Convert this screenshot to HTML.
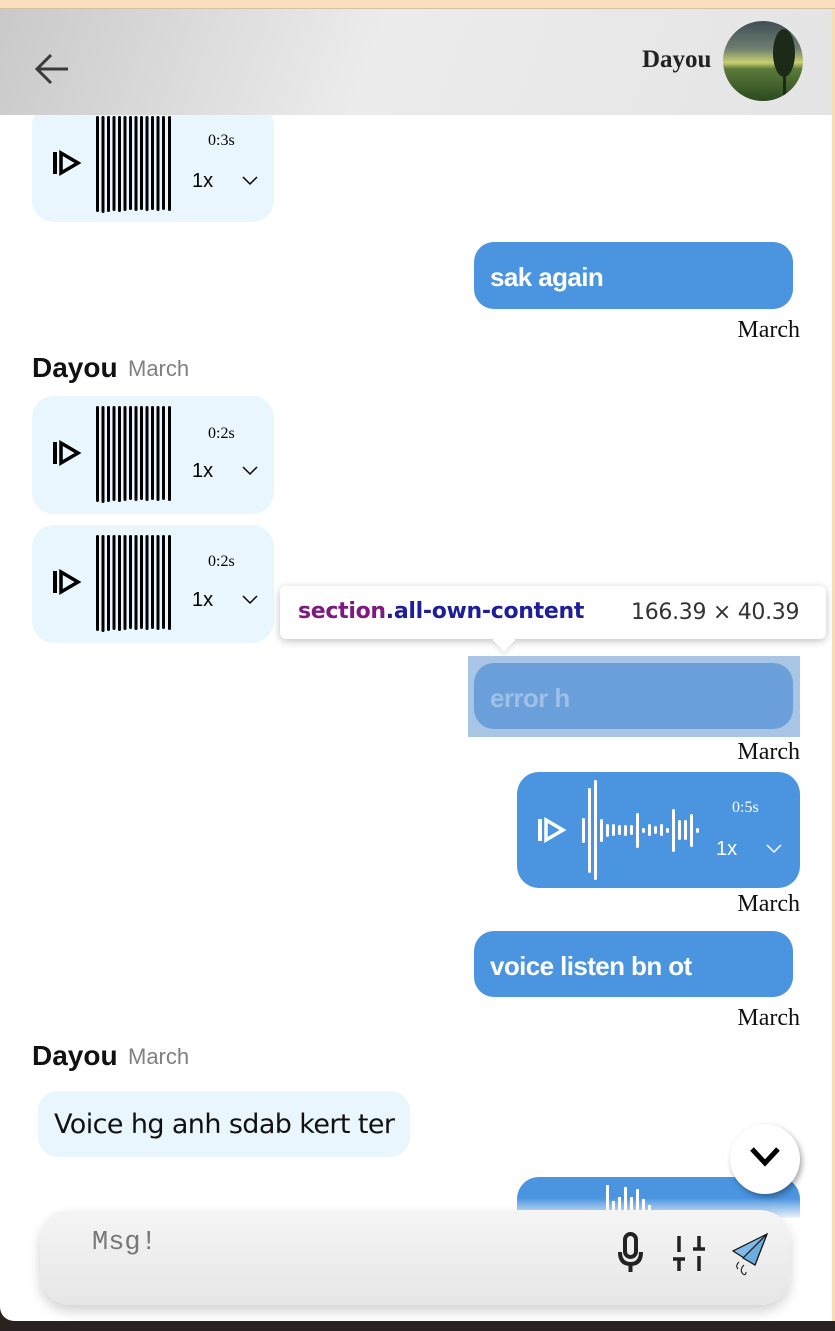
<!DOCTYPE html>
<html><head><meta charset="utf-8"><style>
*{margin:0;padding:0;box-sizing:border-box}
body{width:835px;height:1331px;position:relative;overflow:hidden;background:#2a2220;font-family:"Liberation Sans",sans-serif}
.abs{position:absolute}
.page{left:0;top:0;width:832px;height:1321px;background:#fff;border-bottom-left-radius:14px}
.peach{left:0;top:0;width:835px;height:9px;background:#f9dfbd;border-bottom:1px solid #d9c0a0}
.rline{left:832px;top:9px;width:3px;height:1312px;background:#f7dcb8}
.hdr{left:0;top:9px;width:832px;height:106px;background:linear-gradient(110deg,#c9c9c9 0%,#ececec 45%,#e4e4e4 100%)}
.rv{background:#eaf6fd;border-radius:22px}
.sent{background:#4a94e0;border-radius:20px;color:#fff;font-size:26px;font-weight:bold;padding-left:16px;line-height:70px;font-family:"Liberation Sans",sans-serif;letter-spacing:-0.6px}
.march{font-family:"Liberation Serif",serif;font-size:24px;color:#111;right:35px}
.name{font-family:"Liberation Sans Narrow","Liberation Sans",sans-serif;font-weight:bold;font-size:28px;color:#111}
.nm2{font-family:"Liberation Sans Narrow","Liberation Sans",sans-serif;font-size:22px;color:#808080}
</style></head><body>
<div class="abs page"></div>
<div class="abs peach"></div>
<div class="abs rline"></div>

<div class="abs rv" style="left:32px;top:104px;width:242px;height:118px"></div>
<svg class="abs" style="left:32px;top:104px" width="242" height="118">
<g id="rvg"><rect x="21" y="48" width="4" height="22" fill="#000"/><path d="M29 49 L46 59 L29 69 Z" fill="none" stroke="#000" stroke-width="3.5"/>
<g fill="#000"><rect x="64" y="12" width="3" height="96" rx="1.5"/><rect x="69.5" y="12" width="3" height="97" rx="1.5"/><rect x="75" y="12" width="3" height="96" rx="1.5"/><rect x="80.5" y="12" width="3" height="95" rx="1.5"/><rect x="86" y="12" width="3" height="96" rx="1.5"/><rect x="91.5" y="12" width="3" height="95" rx="1.5"/><rect x="97" y="12" width="3" height="94" rx="1.5"/><rect x="102.5" y="12" width="3" height="95" rx="1.5"/><rect x="108" y="12" width="3" height="94" rx="1.5"/><rect x="113.5" y="12" width="3" height="95" rx="1.5"/><rect x="119" y="12" width="3" height="94" rx="1.5"/><rect x="124.5" y="12" width="3" height="95" rx="1.5"/><rect x="130" y="12" width="3" height="94" rx="1.5"/><rect x="136" y="12" width="3" height="95" rx="1.5"/></g>
<text x="176" y="41" font-family="Liberation Serif" font-size="16" fill="#000">0:3s</text>
<text x="160" y="83" font-family="Liberation Sans" font-size="20" fill="#000">1x</text>
<path d="M211 73 l7 7 l7 -7" fill="none" stroke="#000" stroke-width="1.5"/></g>
</svg>

<div class="abs hdr"></div>
<svg class="abs" style="left:34px;top:52px" width="38" height="34"><path d="M34 17 H4 M17 3 L3 17 L17 31" fill="none" stroke="#3a3a3a" stroke-width="3"/></svg>
<div class="abs" style="left:642px;top:46px;font-family:'Liberation Serif',serif;font-weight:bold;font-size:25px;color:#222">Dayou</div>
<div class="abs" style="left:723px;top:21px;width:80px;height:80px;border-radius:50%;background:linear-gradient(180deg,#3e4e56 0%,#6f7f70 35%,#c8d070 52%,#5c7a3a 60%,#2a4a20 100%);overflow:hidden"><div style="position:absolute;left:50px;top:8px;width:22px;height:48px;border-radius:50%;background:#1e2a18"></div><div style="position:absolute;left:60px;top:50px;width:3px;height:26px;background:#1e2a18"></div></div>

<div class="abs sent" style="left:474px;top:242px;width:319px;height:67px">sak again</div>
<div class="abs march" style="top:317px">March</div>

<div class="abs name" style="left:32px;top:352px">Dayou</div>
<div class="abs nm2" style="left:128px;top:356px">March</div>

<div class="abs rv" style="left:32px;top:396px;width:242px;height:118px"></div>
<svg class="abs" style="left:32px;top:396px" width="242" height="118"><use href="#rvg" transform="translate(0,-2)"/><rect x="170" y="22" width="60" height="25" fill="#eaf6fd"/><text x="176" y="42" font-family="Liberation Serif" font-size="16" fill="#000">0:2s</text></svg>
<div class="abs rv" style="left:32px;top:525px;width:242px;height:118px"></div>
<svg class="abs" style="left:32px;top:525px" width="242" height="118"><use href="#rvg" transform="translate(0,-2)"/><rect x="170" y="22" width="60" height="25" fill="#eaf6fd"/><text x="176" y="41" font-family="Liberation Serif" font-size="16" fill="#000">0:2s</text></svg>

<div class="abs" style="left:280px;top:586px;width:546px;height:53px;background:#fff;border-radius:6px;box-shadow:0 2px 8px rgba(0,0,0,.25)"></div>
<div class="abs" style="left:496px;top:632px;width:16px;height:16px;background:#fff;transform:rotate(45deg);box-shadow:3px 3px 4px rgba(0,0,0,.08)"></div>
<div class="abs" style="left:298px;top:599px;font-family:'DejaVu Sans',sans-serif;font-size:22px;font-weight:bold;letter-spacing:-0.3px"><span style="color:#7c1a80">section</span><span style="color:#1e1e9a">.all-own-content</span></div>
<div class="abs" style="left:631px;top:600px;font-family:'DejaVu Sans',sans-serif;font-size:22px;color:#333;letter-spacing:-0.3px">166.39 × 40.39</div>

<div class="abs" style="left:468px;top:656px;width:332px;height:81px;background:#a8c5e6"></div>
<div class="abs sent" style="left:474px;top:663px;width:319px;height:66px;background:#6b9fd9;color:#9cc0e8">error h</div>
<div class="abs march" style="top:739px">March</div>

<div class="abs" style="left:517px;top:772px;width:283px;height:116px;background:#4a94e0;border-radius:22px"></div>
<svg class="abs" style="left:517px;top:772px" width="283" height="116">
<rect x="21" y="47" width="4" height="22" fill="#fff"/><path d="M29 48 L46 58 L29 68 Z" fill="none" stroke="#fff" stroke-width="3.5"/>
<g fill="#fff">
<rect x="65" y="46" width="3" height="25" rx="1.5"/><rect x="71" y="16" width="3" height="85" rx="1.5"/><rect x="77" y="8" width="3" height="100" rx="1.5"/><rect x="83" y="47" width="3" height="23" rx="1.5"/><rect x="89" y="52" width="3" height="13" rx="1.5"/><rect x="95" y="52" width="3" height="12" rx="1.5"/><rect x="101" y="53" width="3" height="10" rx="1.5"/><rect x="107" y="53" width="3" height="11" rx="1.5"/><rect x="113" y="53" width="3" height="10" rx="1.5"/><rect x="119" y="41" width="3" height="35" rx="1.5"/><rect x="125" y="56" width="3" height="5" rx="1.5"/><rect x="131" y="52" width="3" height="12" rx="1.5"/><rect x="137" y="54" width="3" height="8" rx="1.5"/><rect x="143" y="52" width="3" height="12" rx="1.5"/><rect x="149" y="56" width="3" height="5" rx="1.5"/><rect x="155" y="37" width="3" height="43" rx="1.5"/><rect x="161" y="48" width="3" height="20" rx="1.5"/><rect x="167" y="48" width="3" height="20" rx="1.5"/><rect x="173" y="42" width="3" height="33" rx="1.5"/><rect x="179" y="56" width="3" height="5" rx="1.5"/></g>
<text x="215" y="40" font-family="Liberation Serif" font-size="16" fill="#fff">0:5s</text>
<text x="199" y="83" font-family="Liberation Sans" font-size="20" fill="#fff">1x</text>
<path d="M250 73 l7 7 l7 -7" fill="none" stroke="#fff" stroke-width="1.5"/>
</svg>
<div class="abs march" style="top:891px">March</div>

<div class="abs sent" style="left:474px;top:931px;width:319px;height:66px">voice listen bn ot</div>
<div class="abs march" style="top:1005px">March</div>

<div class="abs name" style="left:32px;top:1040px">Dayou</div>
<div class="abs nm2" style="left:128px;top:1044px">March</div>
<div class="abs rv" style="left:38px;top:1091px;width:372px;height:66px;border-radius:20px;font-family:'DejaVu Sans',sans-serif;font-size:27px;line-height:68px;padding-left:16px;color:#111;letter-spacing:-0.6px">Voice hg anh sdab kert ter</div>

<div class="abs" style="left:517px;top:1177px;width:283px;height:41px;background:#4a94e0;border-radius:22px 22px 0 0;overflow:hidden"></div>
<svg class="abs" style="left:517px;top:1177px" width="283" height="40"><g fill="#fff"><rect x="89" y="8" width="3" height="40"/><rect x="95" y="24" width="3" height="30"/><rect x="101" y="20" width="3" height="30"/><rect x="107" y="10" width="3" height="40"/><rect x="113" y="20" width="3" height="30"/><rect x="119" y="12" width="3" height="40"/><rect x="125" y="22" width="3" height="30"/><rect x="131" y="28" width="3" height="20"/></g></svg>
<div class="abs" style="left:0;top:1198px;width:832px;height:22px;background:linear-gradient(rgba(255,255,255,0),#fff)"></div>

<div class="abs" style="left:730px;top:1124px;width:70px;height:70px;border-radius:50%;background:#fff;box-shadow:2px 3px 6px rgba(0,0,0,.35)"></div>
<svg class="abs" style="left:749px;top:1146px" width="32" height="22"><path d="M3 3 L16 17 L29 3" fill="none" stroke="#000" stroke-width="5"/></svg>

<div class="abs" style="left:40px;top:1210px;width:750px;height:95px;border-radius:30px;background:linear-gradient(#f5f5f5,#e6e6e6);box-shadow:0 6px 12px rgba(0,0,0,.18)"></div>
<div class="abs" style="left:92px;top:1228px;font-family:'Liberation Mono',monospace;font-size:27px;color:#777">Msg!</div>
<svg class="abs" style="left:615px;top:1232px" width="160" height="46">
<rect x="10" y="2" width="11" height="23" rx="5.5" fill="none" stroke="#222" stroke-width="4"/>
<path d="M5 20 Q5 32 15.5 32 Q26 32 26 20 M15.5 32 V40" fill="none" stroke="#222" stroke-width="4"/>
<path d="M64 4 V20 M58 27 H70 M64 27 V39 M78 17 H90 M84 4 V17 M84 24 V39" fill="none" stroke="#222" stroke-width="3.5"/>
<path d="M152 2 L118 19 L140 33 Z" fill="#7fbbe6" stroke="#111" stroke-width="1.2"/>
<path d="M152 2 L128 26 L140 33 Z" fill="#6aaee0" stroke="#111" stroke-width="1.2"/>
<path d="M124 30 q-4 4 -1 7 M129 33 q-5 5 -1 9 q3 2 3 -2" fill="none" stroke="#111" stroke-width="1"/>
</svg>
</body></html>
